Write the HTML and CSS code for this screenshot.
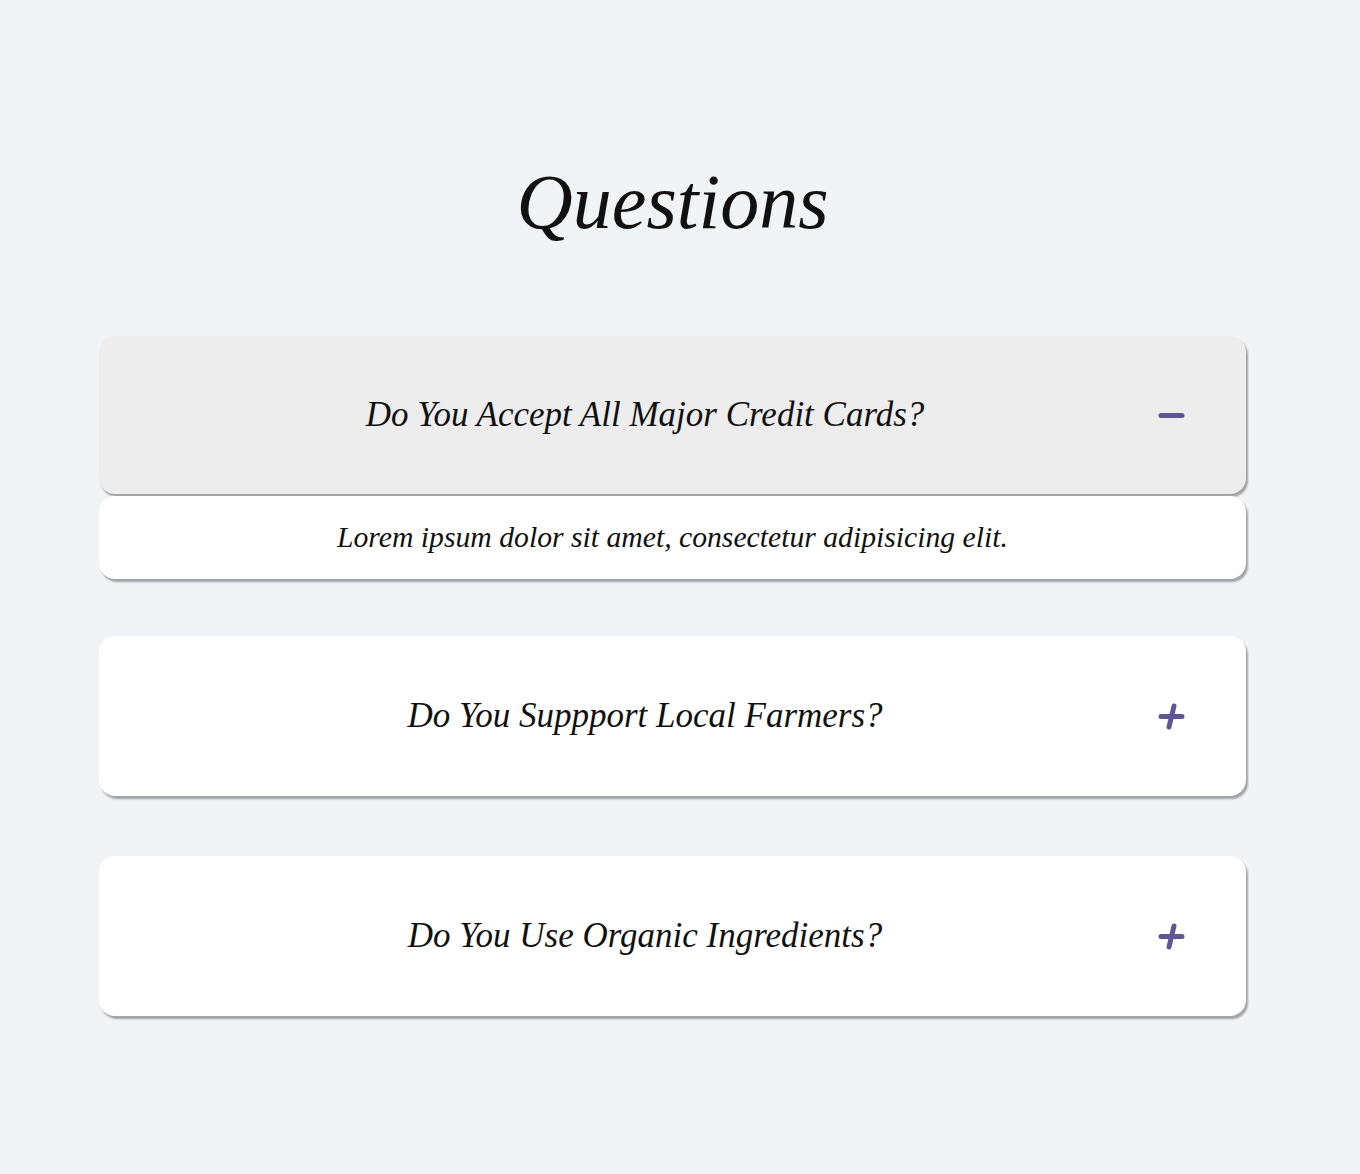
FILE: index.html
```html
<!DOCTYPE html>
<html lang="en">
<head>
<meta charset="utf-8">
<title>Questions</title>
<link rel="stylesheet" href="styles.css">
</head>
<body>
<main class="faq">
  <h1 class="faq-title">Questions</h1>
  <section class="faq-item open">
    <div class="faq-question">
      <span class="faq-q-text">Do You Accept All Major Credit Cards?</span>
      <svg class="faq-icon" viewBox="0 0 27 27" width="27" height="27"><path d="M3 13.5 H24" /></svg>
    </div>
    <div class="faq-answer">Lorem ipsum dolor sit amet, consectetur adipisicing elit.</div>
  </section>
  <section class="faq-item">
    <div class="faq-question">
      <span class="faq-q-text">Do You Suppport Local Farmers?</span>
      <svg class="faq-icon" viewBox="0 0 27 27" width="27" height="27"><path d="M3 13.5 H24 M16 3 L11 24" /></svg>
    </div>
  </section>
  <section class="faq-item">
    <div class="faq-question">
      <span class="faq-q-text">Do You Use Organic Ingredients?</span>
      <svg class="faq-icon" viewBox="0 0 27 27" width="27" height="27"><path d="M3 13.5 H24 M16 3 L11 24" /></svg>
    </div>
  </section>
</main>
</body>
</html>
```

FILE: styles.css
```css
html, body {
  margin: 0;
  padding: 0;
  background: #f0f4f7;
}
body {
  font-family: "Liberation Serif", "Times New Roman", serif;
  font-style: italic;
  color: #111;
}
.faq {
  width: 1147px;
  margin-left: 99px;
  padding-top: 156px;
  padding-bottom: 100px;
  display: flex;
  flex-direction: column;
}
.faq-title {
  margin: 0 0 88px;
  text-align: center;
  font-weight: 400;
  font-size: 78px;
  line-height: 92px;
  color: #111;
}
.faq-item {
  display: flex;
  flex-direction: column;
  gap: 2px;
  margin-bottom: 57px;
}
.faq-item + .faq-item { margin-bottom: 60px; }
.faq-question {
  height: 160px;
  display: flex;
  align-items: center;
  gap: 7px;
  padding: 0 61px 0 40px;
  background: #fff;
  border-radius: 16px;
  box-shadow: 2px 3px 2px rgba(0, 0, 0, 0.33);
}
.faq-item.open .faq-question { height: 158px; background: #ededed; }
.faq-q-text {
  flex: 1;
  text-align: center;
  font-size: 35px;
  line-height: 44px;
}
.faq-icon {
  flex: none;
  fill: none;
  stroke: #5f5692;
  stroke-width: 5;
  stroke-linecap: round;
}
.faq-answer {
  height: 83px;
  display: flex;
  align-items: center;
  justify-content: center;
  background: #fff;
  border-radius: 16px;
  box-shadow: 2px 3px 2px rgba(0, 0, 0, 0.33);
  font-size: 29.7px;
}
```
